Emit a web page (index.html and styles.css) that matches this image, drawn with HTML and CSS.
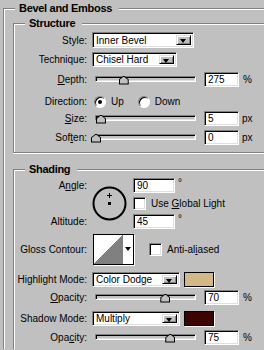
FILE: index.html
```html
<!DOCTYPE html>
<html lang="en">
<head>
    <meta charset="UTF-8">
    <title>Bevel and Emboss</title>
    <link rel="stylesheet" href="styles.css">
</head>
<body>

    <fieldset class="panel">
        <legend>Bevel and Emboss</legend>
        <div class="panel-body">

            <!-- Structure -->
            <fieldset class="group">
                <legend>Structure</legend>
                <div class="group-body structure">
                    <div class="row r-style">
                        <span class="lbl">Style:</span>
                        <div class="select w-style"><span class="val">Inner Bevel</span><span class="drop"></span></div>
                    </div>
                    <div class="row r-tech">
                        <span class="lbl">Technique:</span>
                        <div class="select w-tech"><span class="val">Chisel Hard</span><span class="drop"></span></div>
                    </div>
                    <div class="row r-depth">
                        <span class="lbl"><u>D</u>epth:</span>
                        <div class="track"><span class="thumb" style="left: 28%"></span></div>
                        <div class="field num">275</div>
                        <span class="unit">%</span>
                    </div>
                    <div class="row r-dir">
                        <span class="lbl">Direction:</span>
                        <span class="radio checked"></span><span class="opt">Up</span>
                        <span class="radio"></span><span class="opt">Down</span>
                    </div>
                    <div class="row r-size">
                        <span class="lbl"><u>S</u>ize:</span>
                        <div class="track"><span class="thumb" style="left: 5%"></span></div>
                        <div class="field num">5</div>
                        <span class="unit px">px</span>
                    </div>
                    <div class="row r-soften">
                        <span class="lbl">Sof<u>t</u>en:</span>
                        <div class="track"><span class="thumb" style="left: 0%"></span></div>
                        <div class="field num">0</div>
                        <span class="unit px">px</span>
                    </div>
                </div>
            </fieldset>

            <!-- Shading -->
            <fieldset class="group shading">
                <legend>Shading</legend>
                <div class="group-body">
                    <div class="angle">
                        <span class="lbl a-lbl">A<u>n</u>gle:</span>
                        <svg class="dial" width="35" height="35" viewBox="0 0 35 35">
                            <circle cx="17.5" cy="17.5" r="16" fill="none" stroke="#000" stroke-width="2"/>
                            <path d="M17.5 7v5M15 9.5h5" stroke="#000" stroke-width="1"/>
                            <rect x="16" y="16" width="3" height="3" fill="#000"/>
                        </svg>
                        <div class="a-val"><div class="field deg">90</div><span class="degsym">°</span></div>
                        <div class="a-check"><span class="check"></span><span class="opt">Use <u>G</u>lobal Light</span></div>
                        <span class="lbl alt-lbl">Altitude:</span>
                        <div class="alt-val"><div class="field deg">45</div><span class="degsym">°</span></div>
                    </div>
                    <div class="row r-contour">
                        <span class="lbl">Gloss Contour:</span>
                        <div class="contour"><span class="curve"></span><span class="cdrop"></span></div>
                        <span class="check aa"></span><span class="opt">Anti-al<u>i</u>ased</span>
                    </div>
                    <div class="row r-hmode">
                        <span class="lbl">Highlight Mode:</span>
                        <div class="select w-mode"><span class="val">Color Dodge</span><span class="drop"></span></div>
                        <span class="swatch hl"></span>
                    </div>
                    <div class="row r-op1">
                        <span class="lbl"><u>O</u>pacity:</span>
                        <div class="track"><span class="thumb" style="left: 70%"></span></div>
                        <div class="field num">70</div>
                        <span class="unit">%</span>
                    </div>
                    <div class="row r-smode">
                        <span class="lbl">Shadow Mode:</span>
                        <div class="select w-mode"><span class="val">Multiply</span><span class="drop"></span></div>
                        <span class="swatch sh"></span>
                    </div>
                    <div class="row r-op2">
                        <span class="lbl">Opa<u>c</u>ity:</span>
                        <div class="track"><span class="thumb" style="left: 75%"></span></div>
                        <div class="field num">75</div>
                        <span class="unit">%</span>
                    </div>
                </div>
            </fieldset>

        </div>
    </fieldset>

</body>
</html>
```

FILE: styles.css
```css
* {
    box-sizing: border-box;
}

body {
    margin: 0;
    width: 264px;
    height: 350px;
    overflow: hidden;
    background-color: #c0c0c0;
    font-family: "Liberation Sans", Arial, sans-serif;
    font-size: 10px;
    color: #000;
}

u {
    text-decoration: underline;
    text-underline-offset: 1px;
}

/* etched group boxes, cut off on the right and bottom like the dialog */
fieldset {
    margin: 0;
    padding: 0;
    min-width: 0;
    border: 1px solid #808080;
    border-right: 0;
    box-shadow: 0 1px 0 #fff, inset 1px 1px 0 #fff;
}

legend {
    margin-left: 11px;
    padding: 0 7px 0 4px;
    font-weight: bold;
    font-size: 11px;
    letter-spacing: -0.3px;
    line-height: 12px;
    background-color: #c0c0c0;
}

.panel {
    width: 261px;
    margin: 2px 0 0 3px;
    border-bottom: 0;
    box-shadow: inset 1px 1px 0 #fff;
}

.panel-body {
    padding: 3px 0 0 9px;
}

.group-body {
    padding-bottom: 7px;
}

.shading {
    margin-top: 10px;
    border-bottom: 0;
    box-shadow: inset 1px 1px 0 #fff;
}

.shading .group-body {
    padding-bottom: 4px;
}

/* rows */
.row {
    display: flex;
    align-items: center;
    height: 15px;
}

.lbl {
    width: 78px;
    flex: none;
    padding-right: 5px;
    text-align: right;
    white-space: nowrap;
}

.r-style { margin-top: 3px; height: 16px; }
.r-tech { margin-top: 4px; }
.r-depth { margin-top: 5px; }
.r-dir { margin-top: 7px; }
.r-size { margin-top: 2px; }
.r-soften { margin-top: 4px; }

.r-contour { margin-top: 5px; height: 31px; }
.r-hmode { margin-top: 7px; }
.r-op1 { margin-top: 3px; }
.r-smode { margin-top: 6px; }
.r-op2 { margin-top: 4px; }

/* sunken white fields */
.field,
.select {
    height: 15px;
    background-color: #fff;
    border: 1px solid;
    border-color: #808080 #fff #fff #808080;
    box-shadow: inset 1px 1px 0 #000, inset -1px -1px 0 #dfdfdf;
    padding: 0 3px;
    line-height: 13px;
    white-space: nowrap;
}

.r-style .select {
    height: 16px;
}

.num {
    width: 35px;
    margin-left: 8px;
}

.unit {
    margin-left: 4px;
}

.unit.px {
    margin-left: 3px;
}

/* dropdowns */
.select {
    display: flex;
    align-items: center;
    padding: 2px 2px 2px 3px;
}

.w-style { width: 102px; }
.w-tech { width: 85px; }
.w-mode { width: 88px; }

.val {
    flex: 1;
}

.drop {
    position: relative;
    width: 15px;
    height: 100%;
    background-color: #c0c0c0;
    border: 1px solid;
    border-color: #dfdfdf #000 #000 #dfdfdf;
    box-shadow: inset 1px 1px 0 #fff, inset -1px -1px 0 #808080;
}

.drop::after {
    content: "";
    position: absolute;
    left: 3px;
    top: 3px;
    border-left: 3.5px solid transparent;
    border-right: 3.5px solid transparent;
    border-top: 4px solid #000;
}

/* sliders */
.track {
    position: relative;
    width: 101px;
    height: 6px;
    margin-left: 3px;
    margin-top: -2px;
    background-color: #c0c0c0;
    border: 1px solid;
    border-color: #808080 #fff #fff #808080;
    box-shadow: inset 1px 1px 0 #000, inset -1px -1px 0 #dfdfdf;
}

.thumb {
    position: absolute;
    top: -1px;
    width: 10px;
    height: 9px;
    margin-left: -5px;
    background-color: #000;
    clip-path: polygon(0 100%, 0 45%, 50% 0, 100% 45%, 100% 100%);
}

.thumb::after {
    content: "";
    position: absolute;
    left: 1px;
    top: 1px;
    width: 8px;
    height: 7px;
    background-color: #c0c0c0;
    clip-path: polygon(0 100%, 0 45%, 50% 0, 100% 45%, 100% 100%);
}

/* radios and checks */
.radio {
    position: relative;
    width: 12px;
    height: 12px;
    border-radius: 50%;
    background-color: #fff;
    border: 1px solid;
    border-color: #808080 #fff #fff #808080;
    box-shadow: inset 1px 1px 0 #000;
    margin-left: 2px;
}

.radio + .opt {
    margin-left: 5px;
}

.opt + .radio {
    margin-left: 14px;
}

.radio.checked::after {
    content: "";
    position: absolute;
    left: 3px;
    top: 3px;
    width: 4px;
    height: 4px;
    border-radius: 50%;
    background-color: #000;
}

.check {
    width: 13px;
    height: 13px;
    flex: none;
    background-color: #fff;
    border: 1px solid;
    border-color: #808080 #fff #fff #808080;
    box-shadow: inset 1px 1px 0 #000, inset -1px -1px 0 #dfdfdf;
}

.check + .opt {
    margin-left: 5px;
}

/* angle block */
.angle {
    display: grid;
    grid-template-columns: 78px 41px auto;
    grid-template-rows: 15px 13px 15px;
    row-gap: 4px;
    margin-top: 3px;
}

.a-lbl { grid-column: 1; grid-row: 1; align-self: center; }
.alt-lbl { grid-column: 1; grid-row: 3; align-self: center; }

.dial {
    grid-column: 2;
    grid-row: 1 / 4;
    margin-top: 8px;
}

.a-val,
.alt-val,
.a-check {
    grid-column: 3;
    display: flex;
    align-items: center;
}

.a-val { grid-row: 1; }
.a-check { grid-row: 2; }
.alt-val { grid-row: 3; }

.deg {
    width: 42px;
}

.degsym {
    align-self: flex-start;
    margin-left: 3px;
    line-height: 9px;
}

/* gloss contour */
.contour {
    display: flex;
    width: 41px;
    height: 31px;
    margin-left: 1px;
    border: 1px solid #000;
    box-shadow: 1px 1px 0 #fff;
}

.curve {
    flex: 1;
    background: linear-gradient(to top left, #808080 50%, #fff 50%);
    border-right: 1px solid #808080;
}

.cdrop {
    position: relative;
    width: 10px;
    background-color: #fff;
}

.cdrop::after {
    content: "";
    position: absolute;
    left: 2px;
    top: 12px;
    border-left: 3px solid transparent;
    border-right: 3px solid transparent;
    border-top: 4px solid #000;
}

.aa {
    margin-left: 15px;
}

/* colour swatches */
.swatch {
    width: 30px;
    height: 15px;
    margin-left: 4px;
    border: 1px solid #000;
    box-shadow: 1px 1px 0 #fff;
}

.hl { background-color: #d4b988; }
.sh { background-color: #3c0303; }
```
